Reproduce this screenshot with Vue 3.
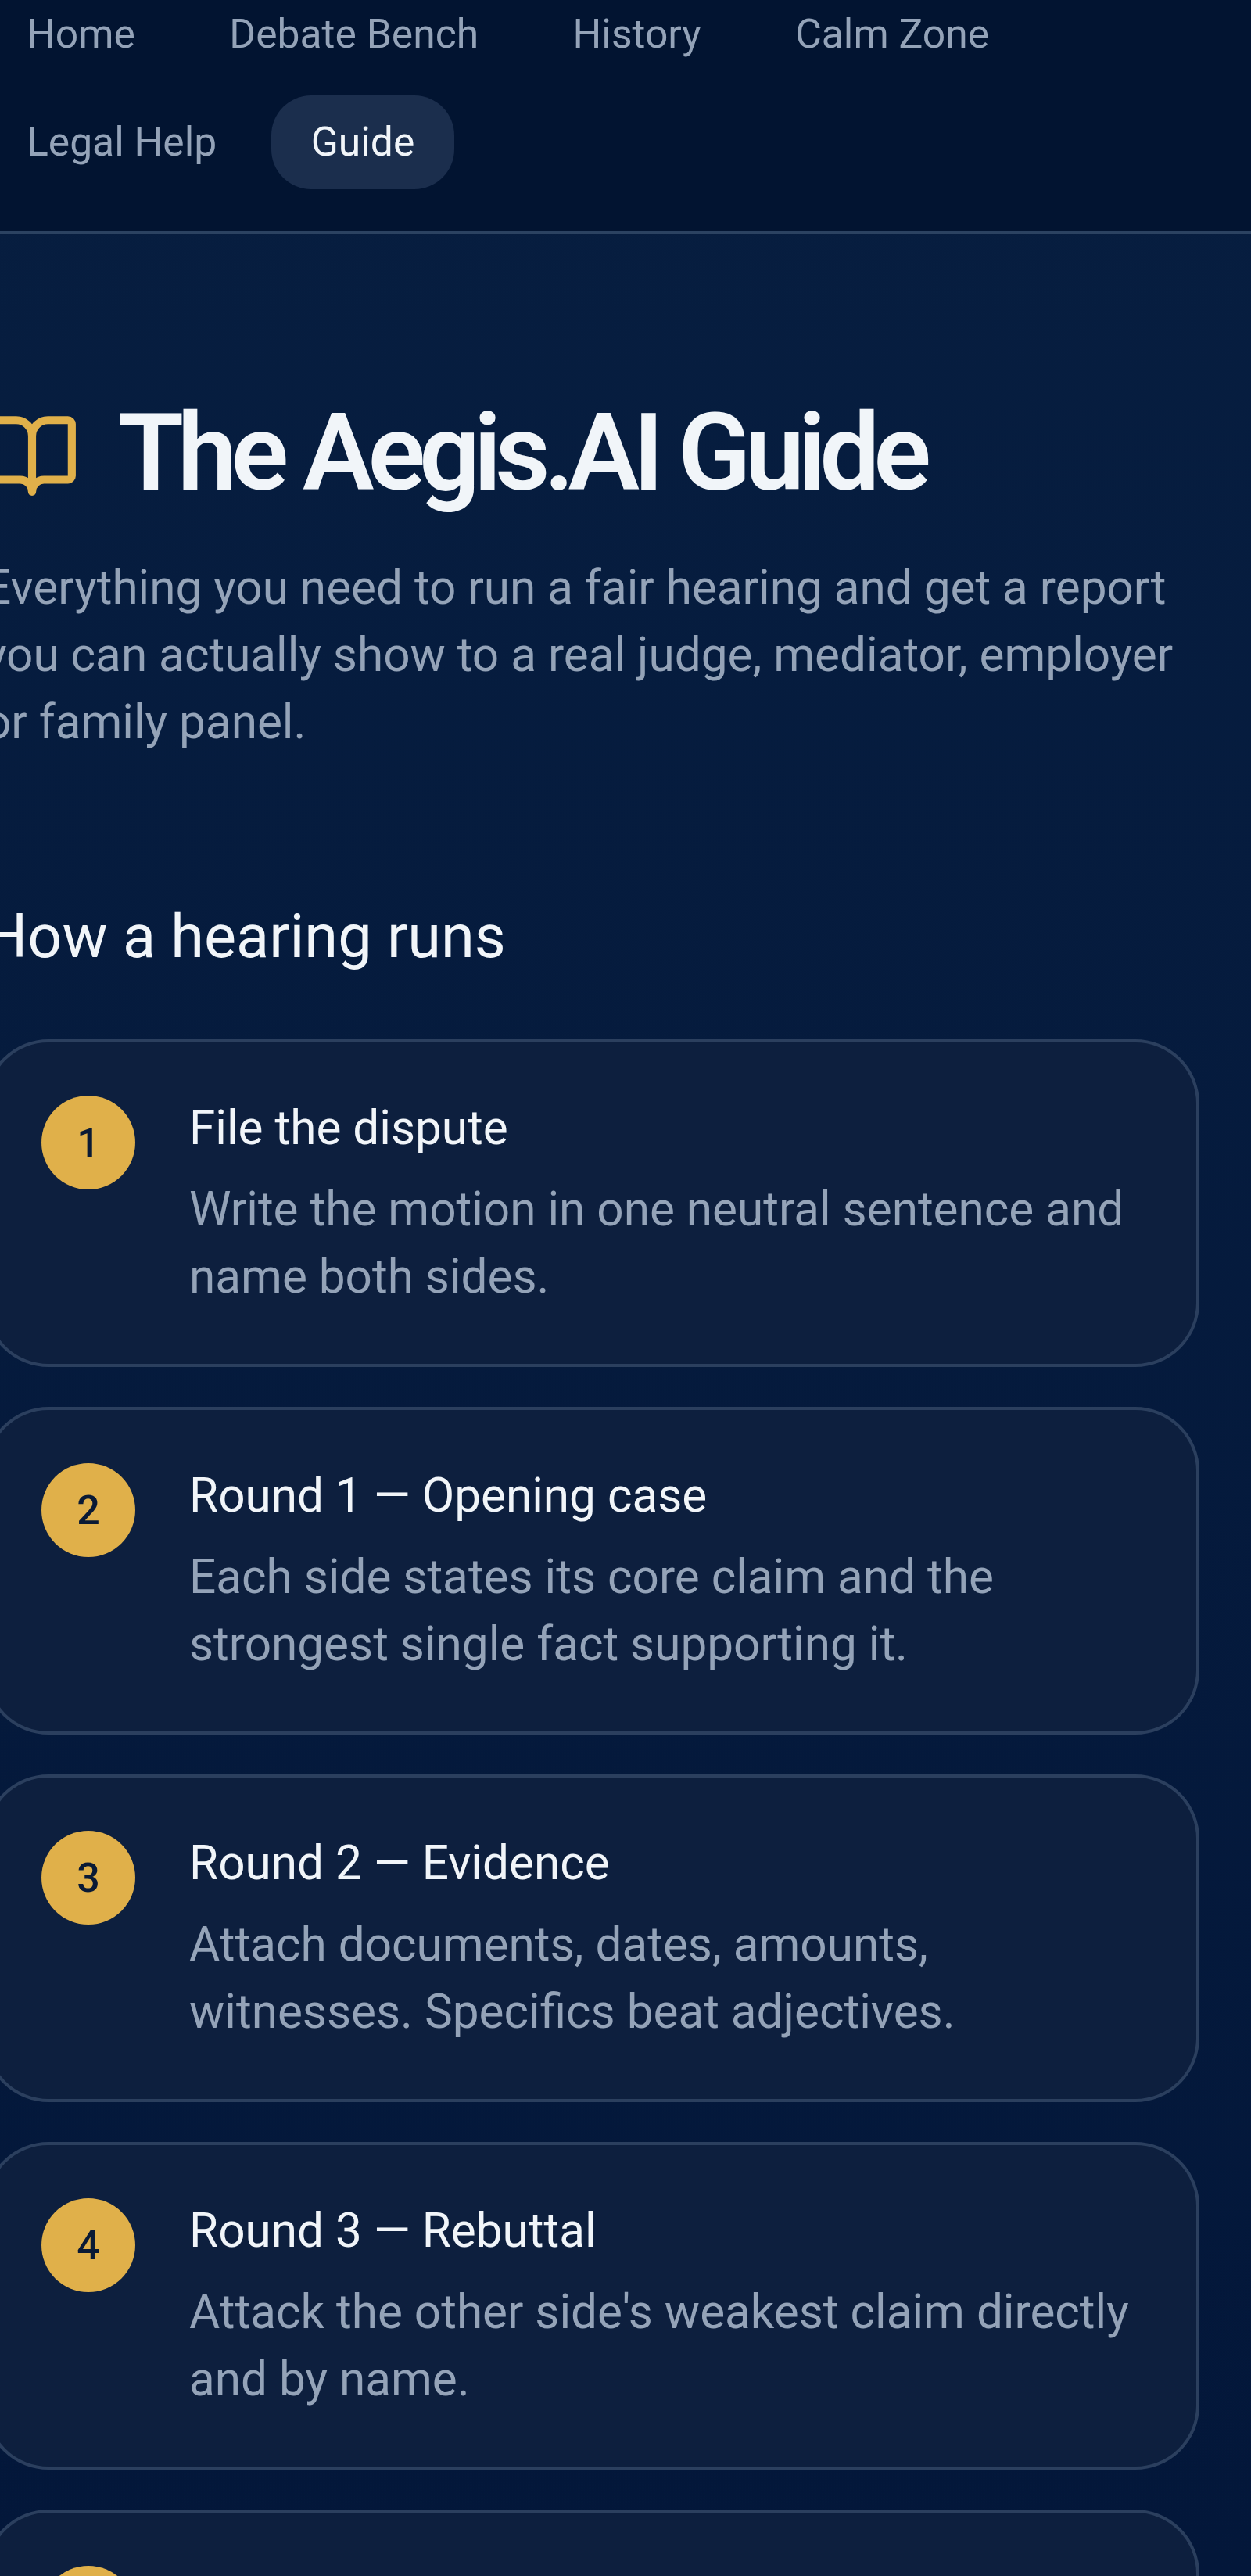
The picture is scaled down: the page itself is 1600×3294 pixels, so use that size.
<script setup>
const links = [
  { label: 'Home' },
  { label: 'Debate Bench' },
  { label: 'History' },
  { label: 'Calm Zone' },
  { label: 'Legal Help' },
  { label: 'Guide', active: true },
]

const steps = [
  { n: 1, title: 'File the dispute', text: 'Write the motion in one neutral sentence and name both sides.' },
  { n: 2, title: 'Round 1 — Opening case', text: 'Each side states its core claim and the strongest single fact supporting it.' },
  { n: 3, title: 'Round 2 — Evidence', text: 'Attach documents, dates, amounts, witnesses. Specifics beat adjectives.' },
  { n: 4, title: 'Round 3 — Rebuttal', text: "Attack the other side's weakest claim directly and by name." },
  { n: 5 },
]
</script>

<template>
  <div class="page">
    <nav class="nav">
      <a v-for="l in links" :key="l.label" class="link" :class="{ active: l.active }">{{ l.label }}</a>
    </nav>

    <main class="main">
      <h1 class="title">
        <svg class="book" viewBox="0 0 24 24" fill="none" stroke="currentColor" stroke-width="2" stroke-linecap="round" stroke-linejoin="round">
          <path d="M12 7v14" />
          <path d="M3 18a1 1 0 0 1-1-1V4a1 1 0 0 1 1-1h5a4 4 0 0 1 4 4 4 4 0 0 1 4-4h5a1 1 0 0 1 1 1v13a1 1 0 0 1-1 1h-6a3 3 0 0 0-3 3 3 3 0 0 0-3-3z" />
        </svg>
        The Aegis.AI Guide
      </h1>
      <p class="lead">
        Everything you need to run a fair hearing and get a report you can actually show to a real judge, mediator, employer or family panel.
      </p>

      <h2 class="heading">How a hearing runs</h2>
      <div class="steps">
        <div v-for="s in steps" :key="s.n" class="card">
          <span class="num">{{ s.n }}</span>
          <div class="body">
            <div class="step-title">{{ s.title }}</div>
            <div class="step-text">{{ s.text }}</div>
          </div>
        </div>
      </div>
    </main>
  </div>
</template>

<style>
html, body {
  margin: 0;
  background: #021536;
}
</style>

<style scoped>
.page {
  width: 1600px;
  height: 3294px;
  overflow: hidden;
  font-family: Roboto, "Liberation Sans", sans-serif;
  background: linear-gradient(180deg, #071e40 0%, #03173a 100%);
}
.nav {
  display: flex;
  flex-wrap: wrap;
  align-content: flex-start;
  gap: 18px 18.5px;
  margin-top: -16px;
  padding: 0 0 53px 0;
  width: 1600px;
  box-sizing: border-box;
  background: #021431;
  border-bottom: 4px solid #2b4261;
}
.link {
  display: block;
  padding: 26px 51px;
  font-size: 51.6px;
  line-height: 68px;
  color: #94a3b8;
  border-radius: 51px;
}
.link:first-child,
.link:nth-child(5) {
  margin-left: -17px;
}
.link:nth-child(4) {
  margin-right: 280px;
}
.link.active {
  background: #1b2e4d;
  color: #f1f5f9;
}
.main {
  margin-left: -20px;
  width: 1554px;
  padding-top: 195px;
}
.title {
  display: flex;
  align-items: center;
  gap: 49px;
  margin: 0;
  font-size: 137px;
  line-height: 171px;
  font-weight: 600;
  letter-spacing: -8.1px;
  color: #f1f5f9;
}
.book {
  width: 122px;
  height: 122px;
  margin-top: 6px;
  flex-shrink: 0;
  color: #e0b04a;
}
.lead {
  margin: 44px 0 0;
  font-size: 60.25px;
  line-height: 86px;
  color: #94a3b8;
}
.heading {
  margin: 171px 0 0;
  font-size: 77.5px;
  line-height: 120px;
  font-weight: 400;
  color: #f1f5f9;
}
.steps {
  display: flex;
  flex-direction: column;
  gap: 51px;
  margin-top: 71px;
}
.card {
  display: flex;
  gap: 69px;
  min-height: 419px;
  padding: 68px 68px 68px 69px;
  box-sizing: border-box;
  background: #0d1f3e;
  border: 4px solid #2b3f5e;
  border-radius: 82px;
}
.num {
  display: flex;
  align-items: center;
  justify-content: center;
  flex-shrink: 0;
  width: 120px;
  height: 120px;
  border-radius: 50%;
  background: #e0b04a;
  color: #0a1a35;
  font-size: 52px;
  font-weight: 500;
}
.body {
  min-width: 0;
}
.step-title {
  font-size: 60.25px;
  line-height: 83px;
  margin-bottom: 20px;
  font-weight: 400;
  color: #f1f5f9;
}
.step-text {
  font-size: 60.25px;
  line-height: 86px;
  color: #94a3b8;
}
</style>
